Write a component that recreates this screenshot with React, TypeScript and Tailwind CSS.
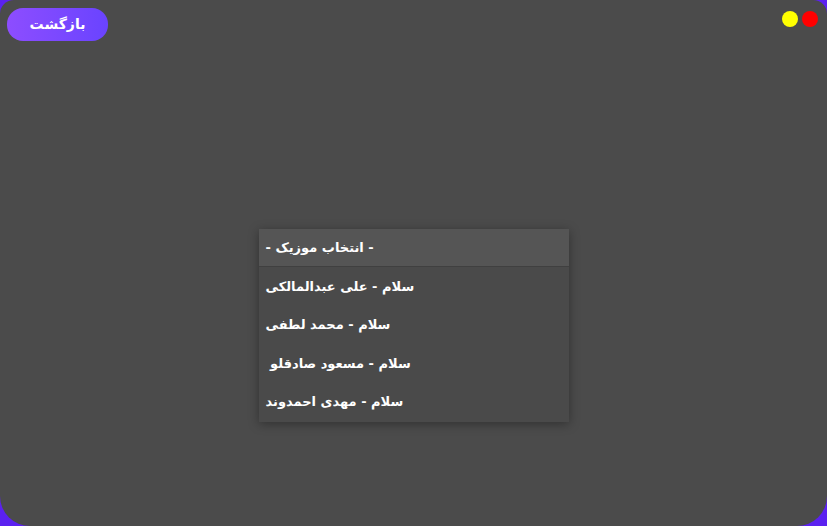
const songs = [
  "سلام - علی عبدالمالکی",
  "سلام - محمد لطفی",
  " سلام - مسعود صادقلو",
  "سلام - مهدی احمدوند",
];

export default function App() {
  return (
    <div className="h-[526px] w-[827px] bg-[#5b21f0] font-['DejaVu_Sans',sans-serif]">
      <div className="relative flex h-full w-full flex-col rounded-t-[14px] rounded-b-[30px] bg-[#4b4b4b]">
        <div className="flex items-start justify-between px-[7px] pt-[8px]">
          <button className="h-[33px] w-[101px] rounded-[16px] bg-gradient-to-r from-[#8d4dff] to-[#6a43ff] text-[14px] font-bold text-white">
            بازگشت
          </button>
          <div className="mr-[2px] mt-[3px] flex gap-[4px]">
            <span className="h-[16px] w-[16px] rounded-full bg-[#ffff00]" />
            <span className="h-[16px] w-[16px] rounded-full bg-[#ff0000]" />
          </div>
        </div>

        <div className="flex flex-1 items-start justify-center pt-[188px]">
          <div className="w-[310px] bg-[#4a4a4a] pb-[1px] shadow-[0_2px_10px_rgba(0,0,0,0.35)]">
            <div className="flex h-[38px] items-center border-b border-[#404040] bg-[#555555] px-[7px] text-[13px] font-bold text-white">
              - انتخاب موزیک -
            </div>
            {songs.map((s) => (
              <div
                key={s}
                className="flex h-[38.5px] items-center whitespace-pre px-[7px] text-[13px] font-bold text-white"
              >
                {s}
              </div>
            ))}
          </div>
        </div>
      </div>
    </div>
  );
}
